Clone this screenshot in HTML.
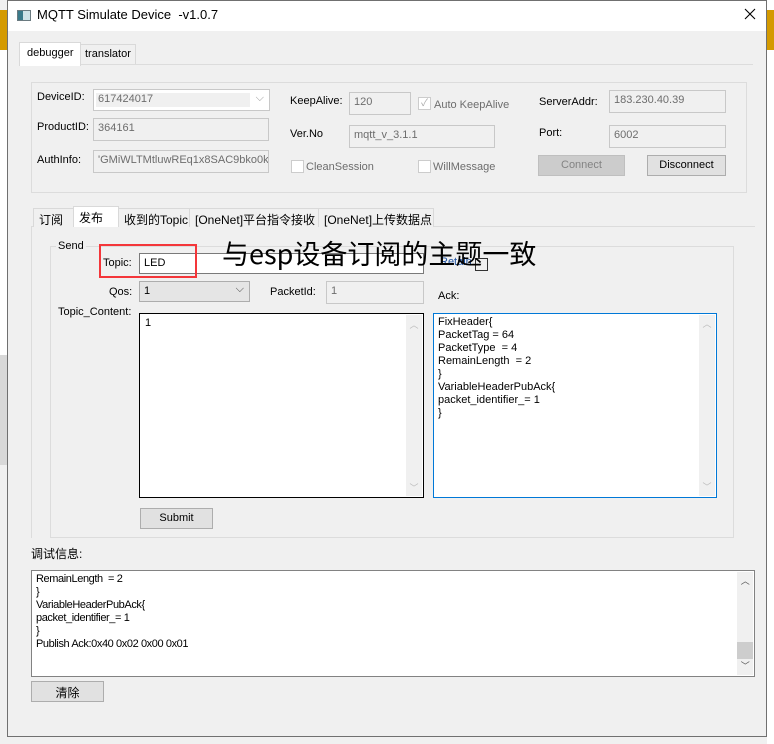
<!DOCTYPE html>
<html><head><meta charset="utf-8"><style>
*{box-sizing:border-box;margin:0;padding:0}
body{width:774px;height:744px;position:relative;overflow:hidden;background:#f0f0f0;font-family:"Liberation Sans","Noto Sans CJK SC",sans-serif;font-size:11px;color:#000}
.a{position:absolute}
.in{position:absolute;background:#f0f0f0;border:1px solid #c8c8c8;color:#6d6d6d;font-size:11px;padding:3px 0 0 4px;white-space:nowrap;overflow:hidden}
.lbl{position:absolute;font-size:11px;white-space:nowrap}
.cb{position:absolute;width:13px;height:13px;border:1px solid #ccc;background:#fff}
.btn{position:absolute;background:#e1e1e1;border:1px solid #adadad;text-align:center;font-size:11px;padding-top:3px}
.tab{position:absolute;top:208px;height:19px;border:1px solid #d9d9d9;border-bottom:none;background:#f0f0f0;font-size:12px;padding:2px 0 0 5px;white-space:nowrap}
.sb{position:absolute;top:1px;right:1px;bottom:1px;width:16px;background:#f0f0f0;color:#bbb;font-size:9px;text-align:center}
</style></head><body>
<div class="a" style="left:0;top:0;width:7px;height:744px;background:#f0f0f0"></div>
<div class="a" style="left:0;top:10px;width:7px;height:40px;background:#d49a00"></div>
<div class="a" style="left:0;top:50px;width:7px;height:305px;background:#fff"></div>
<div class="a" style="left:0;top:355px;width:7px;height:110px;background:#d8d8d8"></div>
<div class="a" style="left:767px;top:0;width:7px;height:744px;background:#fff"></div>
<div class="a" style="left:767px;top:10px;width:7px;height:40px;background:#d49a00"></div>
<div class="a" style="left:7px;top:0;width:760px;height:737px;border:1px solid #707070;background:#f0f0f0"></div>
<div class="a" style="left:8px;top:1px;width:758px;height:30px;background:#fff"></div>
<div class="a" style="left:17px;top:10px;width:14px;height:11px;border:1px solid #6a7a80;background:linear-gradient(90deg,#3a7a8a 40%,#cfe3e8 40%)"></div>
<div class="lbl" style="left:37px;top:7px;font-size:13px">MQTT Simulate Device &nbsp;-v1.0.7</div>
<svg class="a" style="left:744px;top:8px" width="12" height="12" viewBox="0 0 12 12"><path d="M1 1L11 11M11 1L1 11" stroke="#000" stroke-width="1.1"/></svg>
<!-- outer tabs -->
<div class="a" style="left:19px;top:64px;width:734px;height:1px;background:#fff;border-top:1px solid #dcdcdc"></div>
<div class="a" style="left:19px;top:42px;width:62px;height:24px;background:#fff;border:1px solid #d9d9d9;border-bottom:none;padding:4px 0 0 7px">debugger</div>
<div class="a" style="left:80px;top:44px;width:56px;height:20px;border:1px solid #d9d9d9;border-bottom:none;padding:3px 0 0 4px">translator</div>
<!-- group -->
<div class="a" style="left:31px;top:82px;width:716px;height:111px;border:1px solid #dcdcdc"></div>
<div class="lbl" style="left:37px;top:91px">DeviceID:</div>
<div class="in" style="left:93px;top:89px;width:177px;height:22px;background:#fff;padding-left:2px"><span style="background:#f0f0f0;display:inline-block;width:154px;height:14px;padding-left:2px">617424017</span><span style="position:absolute;right:5px;top:2px;color:#999">⌵</span></div>
<div class="lbl" style="left:37px;top:121px">ProductID:</div>
<div class="in" style="left:93px;top:118px;width:176px;height:23px">364161</div>
<div class="lbl" style="left:37px;top:154px">AuthInfo:</div>
<div class="in" style="left:93px;top:150px;width:176px;height:23px">'GMiWLTMtluwREq1x8SAC9bko0k=</div>
<div class="lbl" style="left:290px;top:95px">KeepAlive:</div>
<div class="in" style="left:349px;top:92px;width:62px;height:23px">120</div>
<div class="cb" style="left:418px;top:97px;color:#aaa;font-size:10px;line-height:11px;text-align:center">✓</div>
<div class="lbl" style="left:434px;top:99px;color:#6d6d6d">Auto KeepAlive</div>
<div class="lbl" style="left:290px;top:128px">Ver.No</div>
<div class="in" style="left:349px;top:125px;width:146px;height:23px">mqtt_v_3.1.1</div>
<div class="cb" style="left:291px;top:160px"></div>
<div class="lbl" style="left:306px;top:161px;color:#6d6d6d">CleanSession</div>
<div class="cb" style="left:418px;top:160px"></div>
<div class="lbl" style="left:433px;top:161px;color:#6d6d6d">WillMessage</div>
<div class="lbl" style="left:539px;top:96px">ServerAddr:</div>
<div class="in" style="left:609px;top:90px;width:117px;height:23px">183.230.40.39</div>
<div class="lbl" style="left:539px;top:127px">Port:</div>
<div class="in" style="left:609px;top:125px;width:117px;height:23px">6002</div>
<div class="btn" style="left:538px;top:155px;width:87px;height:21px;background:#ccc;border-color:#bfbfbf;color:#838383">Connect</div>
<div class="btn" style="left:647px;top:155px;width:79px;height:21px">Disconnect</div>
<!-- inner tabs -->
<div class="a" style="left:31px;top:226px;width:724px;height:1px;background:#dcdcdc"></div>
<div class="a" style="left:31px;top:226px;width:1px;height:312px;background:#dcdcdc"></div>
<div class="tab" style="left:33px;width:41px">订阅</div>
<div class="tab" style="left:73px;top:206px;height:21px;width:46px;background:#fff;z-index:2">发布</div>
<div class="tab" style="left:118px;width:72px">收到的Topic</div>
<div class="tab" style="left:189px;width:130px">[OneNet]平台指令接收</div>
<div class="tab" style="left:318px;width:116px">[OneNet]上传数据点</div>
<!-- send group -->
<div class="a" style="left:50px;top:246px;width:684px;height:292px;border:1px solid #dcdcdc"></div>
<div class="lbl" style="left:56px;top:240px;background:#f0f0f0;padding:0 2px">Send</div>
<div class="lbl" style="left:103px;top:257px">Topic:</div>
<div class="in" style="left:139px;top:253px;width:285px;height:21px;background:#fff;color:#000;border-color:#7a7a7a">LED</div>
<div class="a" style="left:99px;top:244px;width:98px;height:34px;border:2px solid #f4363a"></div>
<div class="lbl" style="left:440px;top:256px;color:#1a4fa0">Retain</div>
<div class="a" style="left:475px;top:258px;width:13px;height:13px;border:1px solid #333"></div>
<div class="lbl" style="left:222px;top:233px;font-size:27px;font-family:'Noto Sans CJK SC',sans-serif;line-height:40px">与esp设备订阅的主题一致</div>
<div class="lbl" style="left:109px;top:286px">Qos:</div>
<div class="in" style="left:139px;top:281px;width:111px;height:21px;background:#e5e5e5;border-color:#adadad;color:#000">1<span style="position:absolute;right:5px;top:1px;color:#444">⌵</span></div>
<div class="lbl" style="left:270px;top:286px">PacketId:</div>
<div class="in" style="left:326px;top:281px;width:98px;height:23px">1</div>
<div class="lbl" style="left:438px;top:290px">Ack:</div>
<div class="lbl" style="left:58px;top:306px">Topic_Content:</div>
<div class="a" style="left:139px;top:313px;width:285px;height:185px;border:1px solid #000;background:#fff;padding:3px 5px">1<div class="sb"><div style="margin-top:3px">︿</div><div style="position:absolute;bottom:2px;width:16px">﹀</div></div></div>
<div class="a" style="left:433px;top:313px;width:284px;height:185px;border:1px solid #0078d7;background:#fff;padding:2px 4px;line-height:13px">FixHeader{<br>PacketTag = 64<br>PacketType &nbsp;= 4<br>RemainLength &nbsp;= 2<br>}<br>VariableHeaderPubAck{<br>packet_identifier_= 1<br>}<div class="sb"><div style="margin-top:3px">︿</div><div style="position:absolute;bottom:2px;width:16px">﹀</div></div></div>
<div class="btn" style="left:140px;top:508px;width:73px;height:21px">Submit</div>
<!-- debug -->
<div class="lbl" style="left:31px;top:545px;font-size:12px">调试信息:</div>
<div class="a" style="left:31px;top:570px;width:724px;height:107px;border:1px solid #828282;background:#fff;padding:2px 4px;line-height:13px;font-size:11px;letter-spacing:-0.4px">RemainLength &nbsp;= 2<br>}<br>VariableHeaderPubAck{<br>packet_identifier_= 1<br>}<br>Publish Ack:0x40 0x02 0x00 0x01
<div class="sb" style="color:#555"><div style="margin-top:3px">︿</div><div style="position:absolute;top:70px;left:0;width:16px;height:17px;background:#cdcdcd"></div><div style="position:absolute;bottom:2px;width:16px">﹀</div></div></div>
<div class="btn" style="left:31px;top:681px;width:73px;height:21px;font-size:12px;padding-top:2px">清除</div>
</body></html>
